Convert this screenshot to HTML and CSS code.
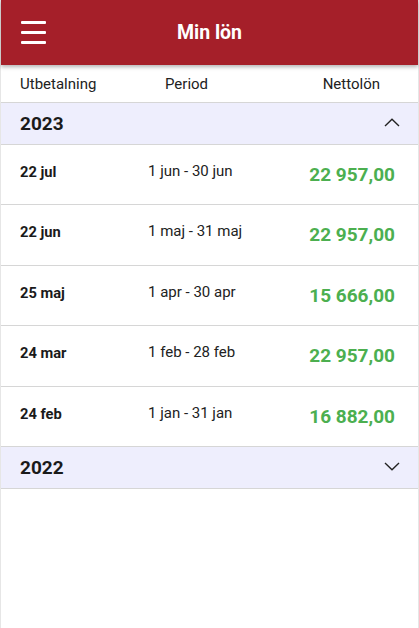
FILE: index.html
```html
<!DOCTYPE html>
<html lang="sv">
<head>
<meta charset="utf-8">
<title>Min lön</title>
<link rel="stylesheet" href="styles.css">
</head>
<body>
<div class="app">
  <header class="topbar">
    <div class="menu" aria-label="Meny">
      <span></span><span></span><span></span>
    </div>
    <h1 class="title">Min lön</h1>
    <div class="spacer"></div>
  </header>

  <div class="colheads">
    <span class="ch-date">Utbetalning</span>
    <span class="ch-period">Period</span>
    <span class="ch-amount">Nettolön</span>
  </div>

  <section class="year">
    <div class="year-head">
      <span class="year-label">2023</span>
      <svg class="chev" width="16" height="9" viewBox="0 0 16 9"><path d="M1 8 L8 1.3 L15 8" fill="none" stroke="#222" stroke-width="1.4"/></svg>
    </div>
    <div class="row"><span class="date">22 jul</span><span class="period">1 jun - 30 jun</span><span class="amount">22 957,00</span></div>
    <div class="row"><span class="date">22 jun</span><span class="period">1 maj - 31 maj</span><span class="amount">22 957,00</span></div>
    <div class="row"><span class="date">25 maj</span><span class="period">1 apr - 30 apr</span><span class="amount">15 666,00</span></div>
    <div class="row"><span class="date">24 mar</span><span class="period">1 feb - 28 feb</span><span class="amount">22 957,00</span></div>
    <div class="row"><span class="date">24 feb</span><span class="period">1 jan - 31 jan</span><span class="amount">16 882,00</span></div>
  </section>

  <section class="year">
    <div class="year-head">
      <span class="year-label">2022</span>
      <svg class="chev" width="16" height="9" viewBox="0 0 16 9"><path d="M1 1 L8 7.7 L15 1" fill="none" stroke="#222" stroke-width="1.4"/></svg>
    </div>
  </section>
</div>
</body>
</html>
```

FILE: styles.css
```css
* { box-sizing: border-box; }
html, body { margin: 0; padding: 0; background: #fff; }
body {
  font-family: Roboto, "Noto Sans", "Liberation Sans", sans-serif;
  color: #1a1a1a;
}
.app {
  min-height: 628px;
  border-left: 1px solid #e6e6e6;
  border-right: 1px solid #e6e6e6;
}
.topbar {
  height: 65px;
  background: #a51f29;
  display: grid;
  grid-template-columns: 1fr auto 1fr;
  align-items: center;
  box-shadow: 0 2px 4px rgba(0,0,0,0.3);
  position: relative;
  z-index: 1;
}
.menu {
  display: flex;
  flex-direction: column;
  gap: 7px;
  width: 25px;
  margin-left: 20px;
}
.menu span {
  display: block;
  height: 3px;
  background: #fff;
  border-radius: 1px;
}
.title {
  margin: 0;
  color: #fff;
  font-size: 19.5px;
  font-weight: 700;
  padding-bottom: 1px;
}
.colheads {
  height: 38px;
  display: flex;
  align-items: center;
  font-size: 15px;
  color: #222;
  border-bottom: 1px solid #d6d6d6;
  padding: 0 38px 0 19px;
}
.ch-date { width: 145px; }
.ch-period { flex: 1; }
.ch-amount { text-align: right; }
.year-head {
  height: 41.5px;
  background: #eeeefd;
  border-bottom: 1px solid #d6d6d6;
  display: flex;
  align-items: center;
  justify-content: space-between;
  padding: 0 18px 0 19px;
}
.year-label {
  font-size: 19px;
  font-weight: 700;
  color: #1a1a1a;
}
.chev { display: block; margin-top: -2px; }
.row {
  height: 60.6px;
  border-bottom: 1px solid #d6d6d6;
  display: flex;
  align-items: flex-start;
  padding: 0 23px 0 19px;
}
.date {
  width: 128px;
  font-size: 14.7px;
  font-weight: 700;
  line-height: 20px;
  margin-top: 17px;
}
.period {
  flex: 1;
  font-size: 15px;
  line-height: 20px;
  margin-top: 16px;
  color: #222;
}
.amount {
  font-size: 19px;
  font-weight: 700;
  line-height: 24px;
  margin-top: 18px;
  color: #4caf50;
  text-align: right;
}
```
